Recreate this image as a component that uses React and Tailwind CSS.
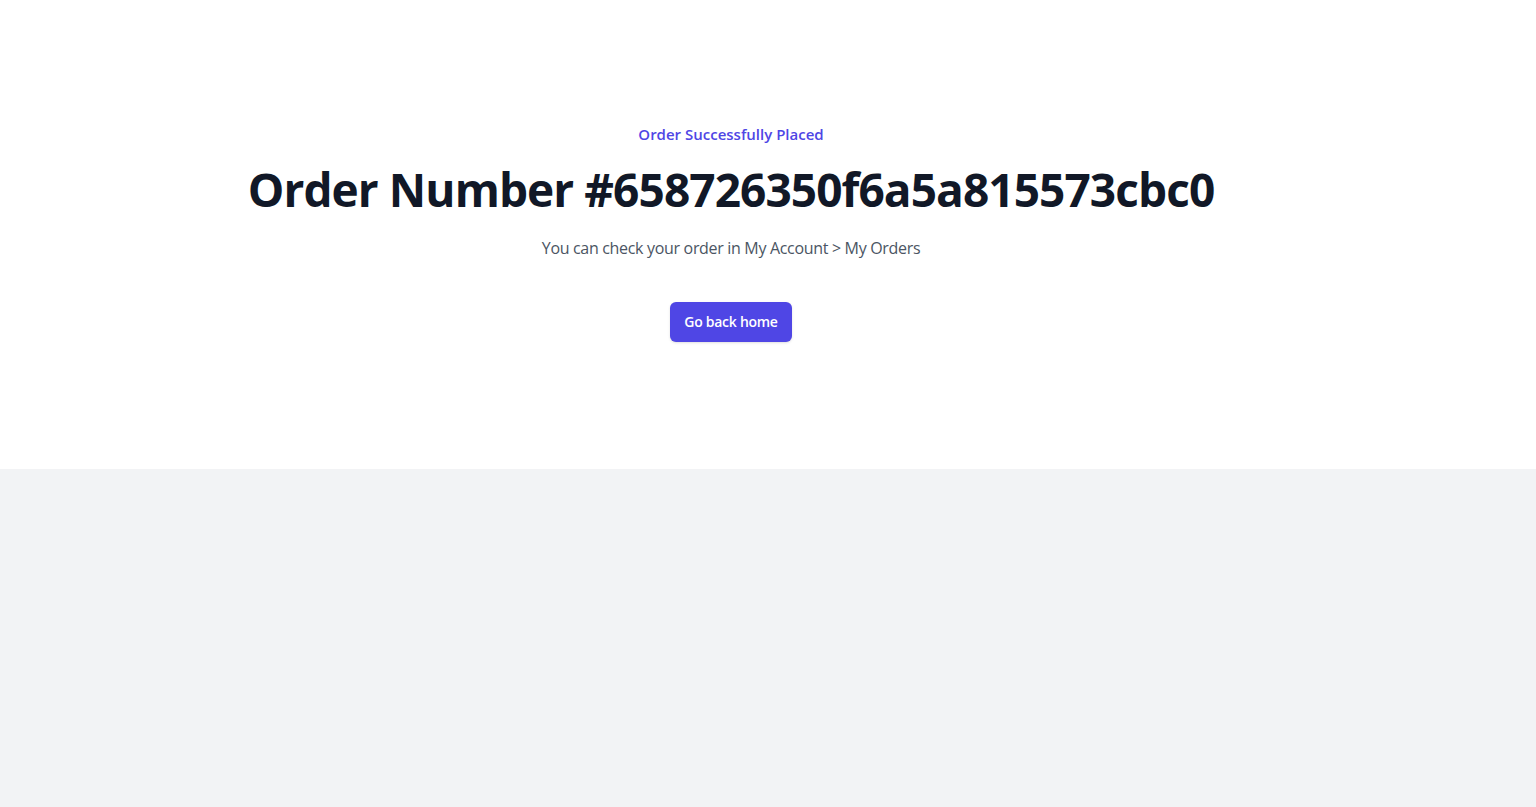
import React from "react";

const FONT = { fontFamily: '"Open Sans", "Noto Sans", "Liberation Sans", sans-serif' };

export default function App() {
  return (
    <div className="min-h-screen bg-[#f2f3f5]" style={FONT}>
      <main className="bg-white pt-[122px] pb-[127px]">
        <div className="flex justify-center pr-[74px]">
          <div className="text-center">
            <p className="text-[15px] leading-6 font-semibold text-[#4f46e5]">
              Order Successfully Placed
            </p>
            <h1 className="mt-[19px] text-[46px] leading-[48px] font-bold tracking-[-0.02em] text-[#111827]">
              Order Number #658726350f6a5a815573cbc0
            </h1>
            <p className="mt-[21px] text-base leading-7 tracking-[-0.02em] text-[#4b5563]">
              You can check your order in My Account &gt; My Orders
            </p>
            <div className="mt-10 flex items-center justify-center">
              <a
                href="#"
                className="rounded-md bg-[#4f46e5] px-3.5 py-2.5 text-sm leading-5 font-semibold tracking-[-0.02em] text-white shadow-sm hover:bg-[#6366f1]"
              >
                Go back home
              </a>
            </div>
          </div>
        </div>
      </main>
    </div>
  );
}
